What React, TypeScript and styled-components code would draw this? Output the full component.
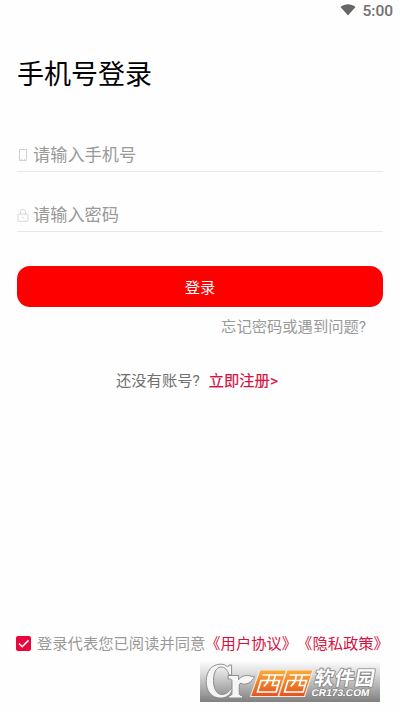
import React, { useState } from "react";
import styled, { createGlobalStyle } from "styled-components";

const GlobalStyle = createGlobalStyle`
  * { box-sizing: border-box; }
  body {
    margin: 0;
    background: #fff;
    font-family: Roboto, "Noto Sans CJK SC", sans-serif;
  }
`;

const Screen = styled.main`
  display: flex;
  flex-direction: column;
  width: 400px;
  height: 712px;
  overflow: hidden;
  background: #fefefe;
`;

const StatusBar = styled.header`
  display: flex;
  justify-content: flex-end;
  align-items: center;
  gap: 6px;
  height: 22px;
  padding-right: 7px;
  color: #707070;
  font-size: 15.5px;
  font-weight: 500;

  svg { margin-bottom: 2px; }
`;

const Title = styled.h1`
  margin: 33px 17px 0;
  height: 40px;
  line-height: 40px;
  font-size: 27px;
  font-weight: 400;
  color: #000;
`;

const Form = styled.form`
  display: flex;
  flex-direction: column;
  margin: 44px 17px 0;
`;

const Field = styled.label`
  display: flex;
  align-items: center;
  height: 33px;
  margin-bottom: 27px;
  border-bottom: 1px solid #e8e8e8;

  svg {
    flex: none;
    width: 12px;
    height: 14px;
    margin-right: 4px;
  }
`;

const Input = styled.input`
  flex: 1;
  min-width: 0;
  height: 30px;
  padding: 0;
  border: 0;
  outline: 0;
  background: transparent;
  font-family: inherit;
  font-size: 17.2px;
  color: #333;

  &::placeholder { color: #999; opacity: 1; }
`;

const SubmitButton = styled.button`
  height: 41px;
  margin-top: 7px;
  padding: 3px 0 0;
  border: 0;
  border-radius: 13px;
  background: #fe0000;
  color: #fff;
  font-family: inherit;
  font-size: 15.3px;
  line-height: 38px;
`;

const ForgotLink = styled.a`
  align-self: flex-end;
  height: 24px;
  margin: 8px 17px 0 0;
  font-size: 15.3px;
  line-height: 24px;
  color: #999;
`;

const RegisterLine = styled.p`
  display: flex;
  gap: 9px;
  height: 24px;
  margin: 30px 0 0 116px;
  font-size: 15.3px;
  line-height: 24px;
  color: #707070;
`;

const AccentLink = styled.a`
  color: #d8103f;
  -webkit-text-stroke: 0.2px currentColor;
`;

const Footer = styled.footer`
  margin-top: auto;
  height: 81px;
`;

const Agreement = styled.div`
  display: flex;
  align-items: center;
  height: 24px;
  padding-left: 16px;
  font-size: 15.3px;
  line-height: 24px;
  color: #999;
  white-space: nowrap;
`;

const AgreementText = styled.span`
  padding-top: 1px;
`;

const CheckBox = styled.button`
  display: flex;
  flex: none;
  width: 15px;
  height: 15px;
  margin-right: 6px;
  padding: 0;
  border: 0;
  border-radius: 2px;
  background: #e9063c;
`;

const PolicyLink = styled.a`
  padding-top: 1px;
  color: #d8103f;
`;

const Brand = styled.div`
  width: 180px;
  height: 40px;
  margin: 7px 0 0 200px;
  background: linear-gradient(#fafafa, #dcdcdc 28%, #808080);

  svg { display: block; }
`;

const WifiIcon = () => (
  <svg width="16" height="12" viewBox="0 0 16 12">
    <path d="M.5 3C5-.6 11-.6 15.500 3L8 11.500z" fill="#666" />
  </svg>
);

const PhoneIcon = () => (
  <svg viewBox="0 0 12 14" fill="none" stroke="#c4c4c4">
    <path d="M2.500 1.500h7v11h-7z" strokeWidth=".8" />
    <path d="M4 11.500h1m2 0h1" strokeWidth=".8" />
  </svg>
);

const LockIcon = () => (
  <svg viewBox="0 0 12 14" fill="none" stroke="#d2d2d2">
    <rect x="1" y="6" width="10" height="7.300" rx=".6" strokeWidth=".9" />
    <path d="M3.500 6V3.700a2.500 2.500 0 0 1 5 0V6M6 8.700v2" strokeWidth=".9" />
  </svg>
);

const CheckIcon = () => (
  <svg width="15" height="15" viewBox="0 0 15 15">
    <path d="M3 7.500 6.200 10.700 12.500 4.400" fill="none" stroke="#fff" strokeWidth="1.600" />
  </svg>
);

const BrandLogo = () => (
  <svg width="180" height="40" viewBox="0 0 180 40">
    <defs>
      <linearGradient id="orange" x2="0" y2="1">
        <stop stopColor="#f9ad37" />
        <stop offset="1" stopColor="#e4521d" />
      </linearGradient>
    </defs>
    <g fill="#f5f5f5" stroke="#858585" strokeWidth=".9" strokeLinejoin="round">
      <path d="M29 3h2.600v10h-2.500C27.500 7.700 24.800 5 21 5c-5 0-7.500 6.300-7.500 13.600C13.500 27 16.800 32.500 21.800 32.500c4.200 0 7.500-2.600 9.500-6.300l1.300 1C30.400 33 26.500 36 20.500 36 11.700 36 6.200 29.500 6.200 19.200 6.200 9 12.300 2.200 20.500 2.200c3.200 0 5.500 1 7.300 2.800z" />
      <path d="M28 13.500h10.500v4.300c2.500-3.500 6.500-5 11-4 2 .4 3.500.8 5 .7-2.500 5.600-8.700 9.700-14 6.600L39.200 23v8.300c0 1.800.9 2.200 3.400 2.400V36H28.800v-2.300c2.500-.2 3.200-.6 3.200-2.400V19.500c0-2-.6-2.500-4-2.700z" />
    </g>
    <g stroke="#f6e8dc" strokeWidth="1.100">
      <path d="M60 8h26.500L78 34.500H50.500z" fill="url(#orange)" />
      <path d="M87 8h26L104.500 34.500H78.500z" fill="url(#orange)" />
    </g>
    <g fill="none" stroke="#fff" strokeWidth="1.700">
      <path d="M62.500 13h21M61 18.500h18.500l-3.400 11.500H57.500zM69.500 13l-1.600 6.500-4 5M75.500 13l-3.200 10.500h5" />
      <path d="M89.500 13h21M88 18.500h18.500l-3.400 11.500H84.500zM96.500 13l-1.600 6.500-4 5M102.500 13l-3.200 10.500h5" />
    </g>
    <g
      transform="skewX(-10)"
      fill="#fff"
      stroke="#858585"
      paintOrder="stroke"
      strokeLinejoin="round"
    >
      <text x="117.500" y="22.500" fontFamily="Noto Sans CJK SC, sans-serif" fontSize="19.500" fontWeight="700" textLength="60" strokeWidth="1.800">软件园</text>
      <text x="117" y="34" fontFamily="Liberation Sans, sans-serif" fontSize="9.800" fontWeight="700" textLength="58" lengthAdjust="spacingAndGlyphs" strokeWidth="1.500">CR173.COM</text>
    </g>
  </svg>
);

export default function App() {
  const [agreed, setAgreed] = useState(true);
  return (
    <>
      <GlobalStyle />
      <Screen>
        <StatusBar><WifiIcon /><span>5:00</span></StatusBar>
        <Title>手机号登录</Title>
        <Form onSubmit={(event) => event.preventDefault()}>
          <Field><PhoneIcon /><Input type="tel" placeholder="请输入手机号" /></Field>
          <Field><LockIcon /><Input type="password" placeholder="请输入密码" /></Field>
          <SubmitButton type="submit">登录</SubmitButton>
          <ForgotLink>忘记密码或遇到问题?</ForgotLink>
        </Form>
        <RegisterLine><span>还没有账号?</span><AccentLink>立即注册&gt;</AccentLink></RegisterLine>
        <Footer>
          <Agreement>
            <CheckBox type="button" role="checkbox" aria-checked={agreed} onClick={() => setAgreed(!agreed)}>
              {agreed && <CheckIcon />}
            </CheckBox>
            <AgreementText>登录代表您已阅读并同意</AgreementText>
            <PolicyLink>《用户协议》</PolicyLink>
            <PolicyLink>《隐私政策》</PolicyLink>
          </Agreement>
          <Brand><BrandLogo /></Brand>
        </Footer>
      </Screen>
    </>
  );
}
